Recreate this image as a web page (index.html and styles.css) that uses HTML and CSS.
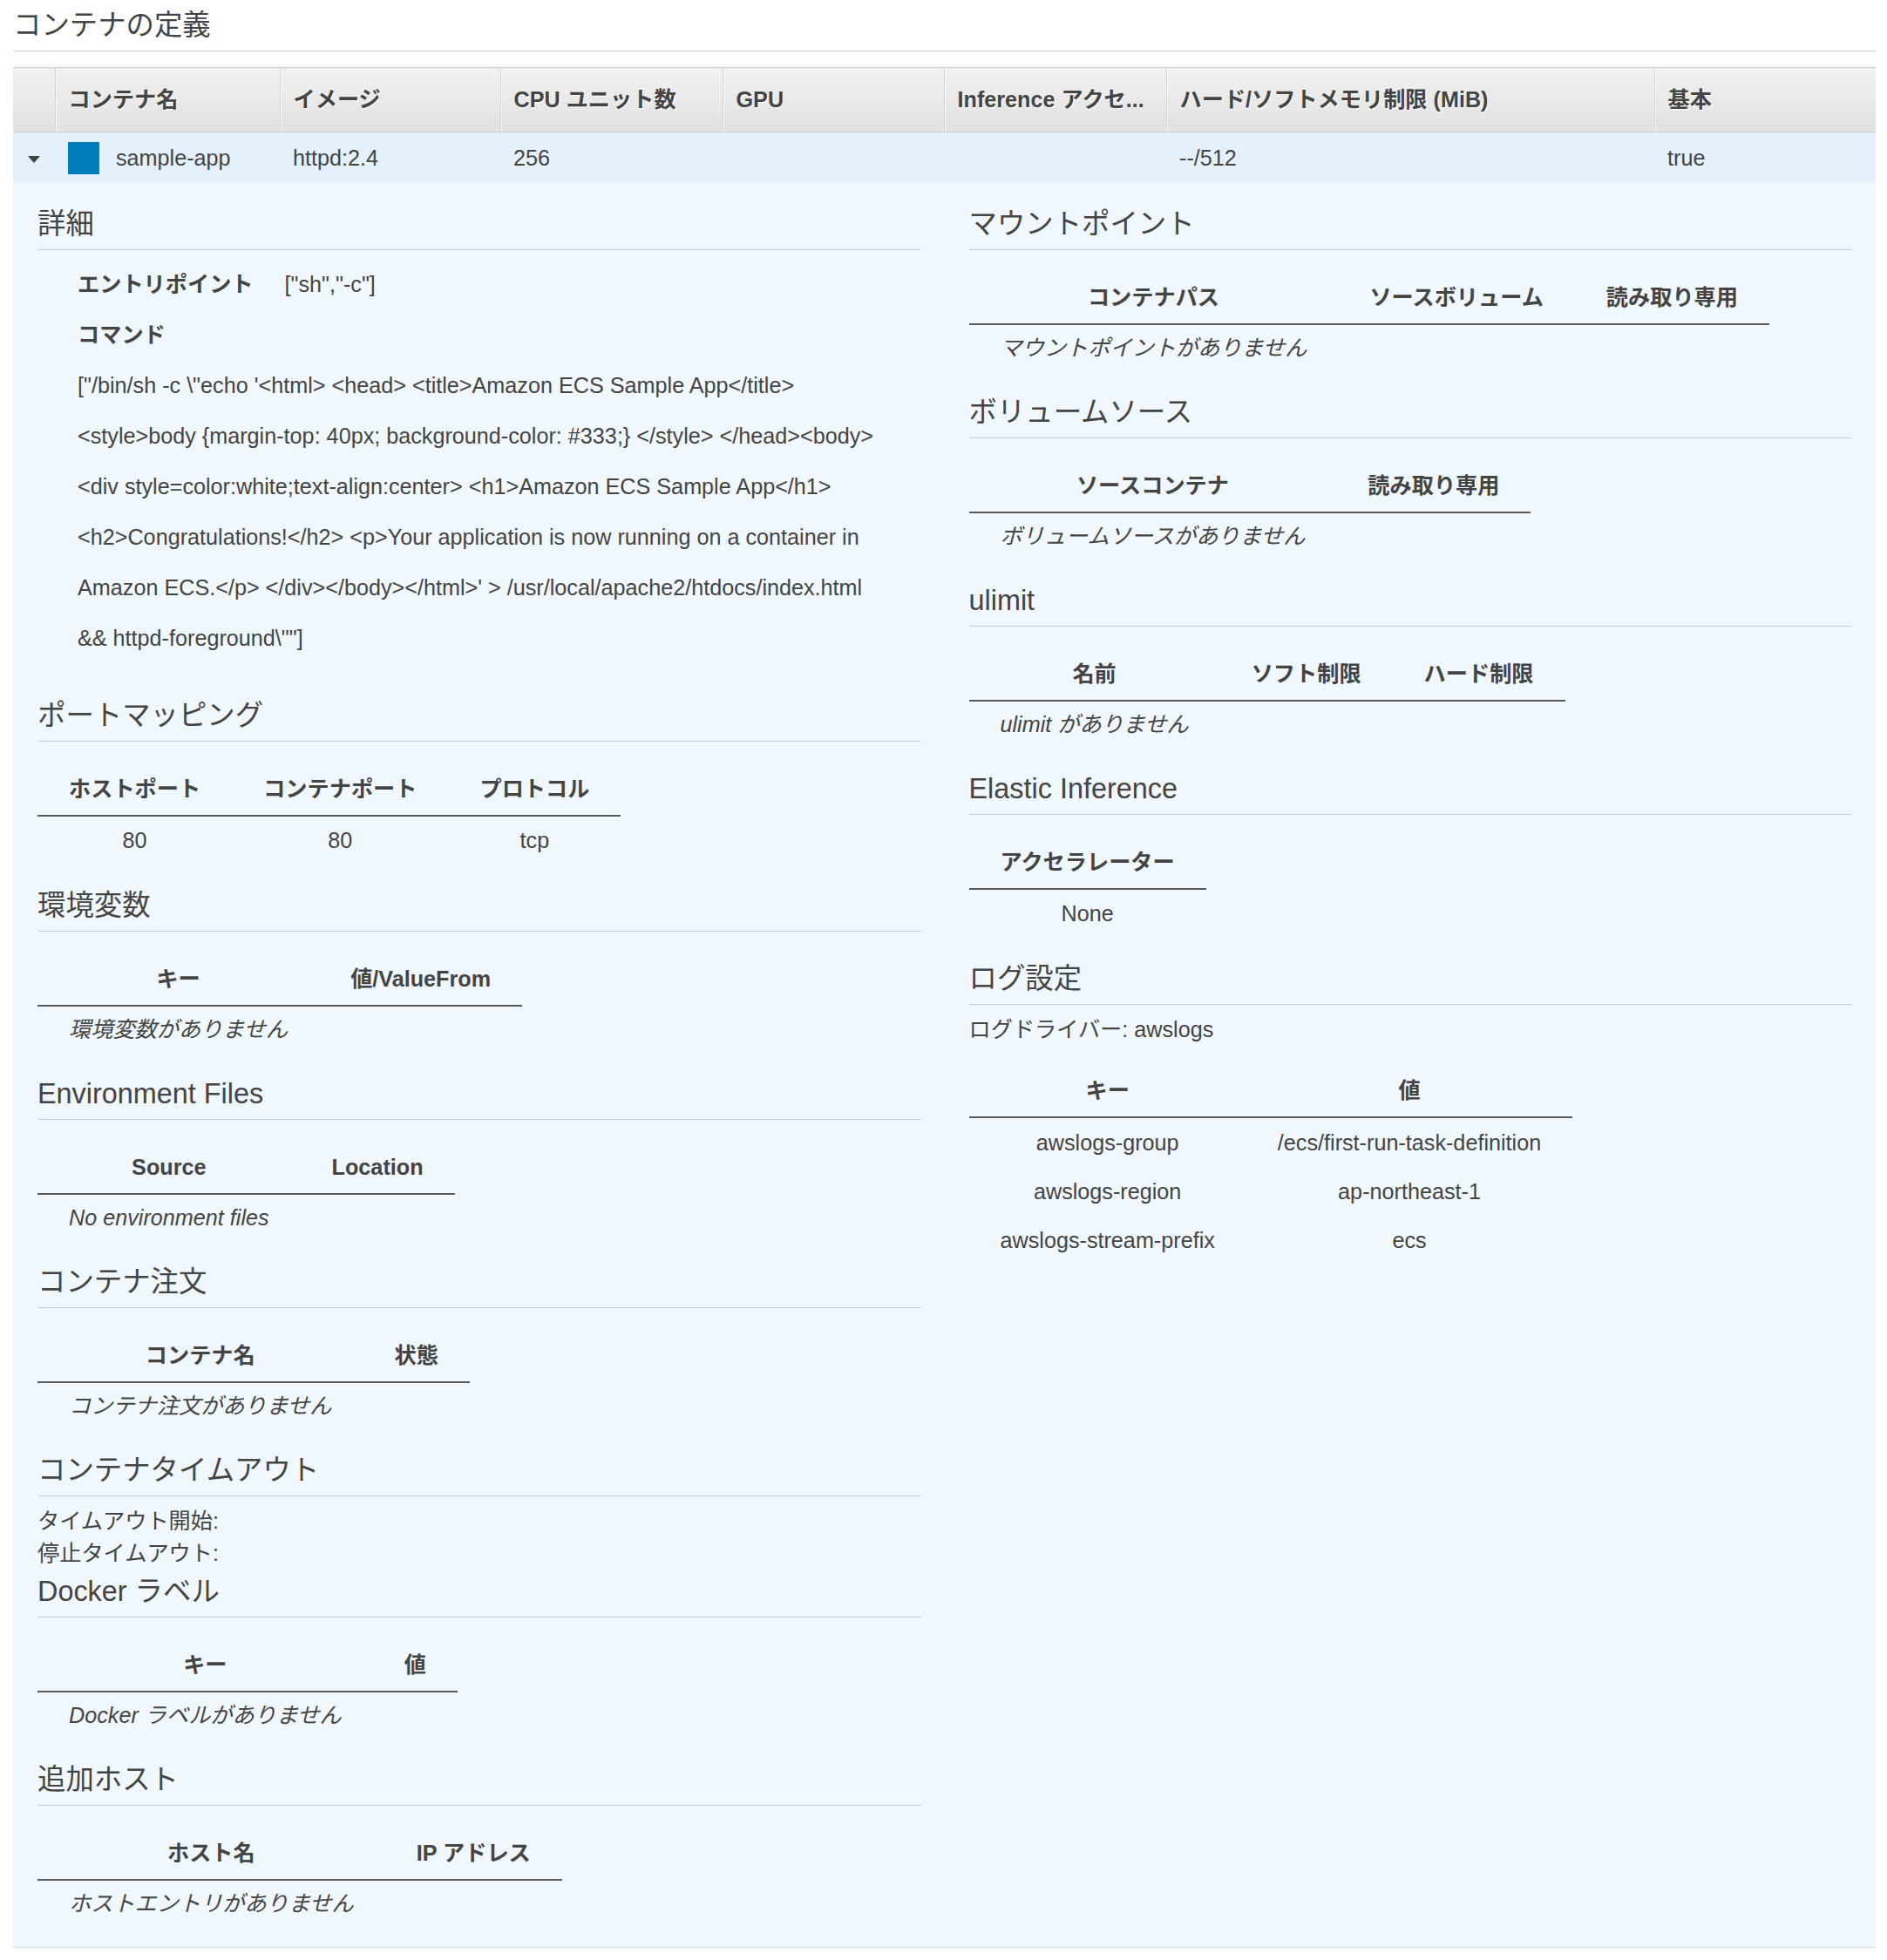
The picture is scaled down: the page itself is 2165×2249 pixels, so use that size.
FILE: index.html
```html
<!DOCTYPE html>
<html lang="ja">
<head>
<meta charset="utf-8">
<title>コンテナの定義</title>
<link rel="stylesheet" href="styles.css">
</head>
<body>
<div class="page">
  <h2 class="page-title">コンテナの定義</h2>
  <table class="grid">
    <colgroup>
      <col class="c-toggle"><col class="c-name"><col class="c-image"><col class="c-cpu"><col class="c-gpu"><col class="c-inf"><col class="c-mem"><col class="c-ess">
    </colgroup>
    <thead>
      <tr class="row-head">
        <th></th>
        <th>コンテナ名</th>
        <th>イメージ</th>
        <th>CPU ユニット数</th>
        <th>GPU</th>
        <th>Inference アクセ...</th>
        <th>ハード/ソフトメモリ制限 (MiB)</th>
        <th>基本</th>
      </tr>
    </thead>
    <tbody>
      <tr class="row-main">
        <td class="toggle"><span class="caret"></span></td>
        <td><div class="name"><span class="swatch"></span><span>sample-app</span></div></td>
        <td>httpd:2.4</td>
        <td>256</td>
        <td></td>
        <td></td>
        <td>--/512</td>
        <td>true</td>
      </tr>
      <tr class="row-detail">
        <td colspan="8">
          <div class="detail">
            <div class="col">
              <section class="sec">
                <h3 class="sec-title">詳細</h3>
                <div class="kv">
                  <div class="kv-row"><span class="kv-key">エントリポイント</span><span class="kv-val">["sh","-c"]</span></div>
                  <div class="kv-row"><span class="kv-key">コマンド</span></div>
                  <div class="kv-cmd">["/bin/sh -c \"echo '&lt;html&gt; &lt;head&gt; &lt;title&gt;Amazon ECS Sample App&lt;/title&gt; &lt;style&gt;body {margin-top: 40px; background-color: #333;} &lt;/style&gt; &lt;/head&gt;&lt;body&gt; &lt;div style=color:white;text-align:center&gt; &lt;h1&gt;Amazon ECS Sample App&lt;/h1&gt; &lt;h2&gt;Congratulations!&lt;/h2&gt; &lt;p&gt;Your application is now running on a container in Amazon ECS.&lt;/p&gt; &lt;/div&gt;&lt;/body&gt;&lt;/html&gt;' &gt; /usr/local/apache2/htdocs/index.html &amp;&amp; httpd-foreground\""]</div>
                </div>
              </section>

              <section class="sec">
                <h3 class="sec-title">ポートマッピング</h3>
                <table class="sub">
                  <thead><tr><th>ホストポート</th><th>コンテナポート</th><th>プロトコル</th></tr></thead>
                  <tbody><tr><td>80</td><td>80</td><td>tcp</td></tr></tbody>
                </table>
              </section>

              <section class="sec">
                <h3 class="sec-title">環境変数</h3>
                <table class="sub">
                  <thead><tr><th>キー</th><th>値/ValueFrom</th></tr></thead>
                  <tbody><tr><td class="empty">環境変数がありません</td></tr></tbody>
                </table>
              </section>

              <section class="sec">
                <h3 class="sec-title">Environment Files</h3>
                <table class="sub">
                  <thead><tr><th>Source</th><th>Location</th></tr></thead>
                  <tbody><tr><td class="empty">No environment files</td></tr></tbody>
                </table>
              </section>

              <section class="sec">
                <h3 class="sec-title">コンテナ注文</h3>
                <table class="sub">
                  <thead><tr><th>コンテナ名</th><th>状態</th></tr></thead>
                  <tbody><tr><td class="empty">コンテナ注文がありません</td></tr></tbody>
                </table>
              </section>

              <section class="sec sec-tight">
                <h3 class="sec-title">コンテナタイムアウト</h3>
                <div class="lines">
                  <div>タイムアウト開始:</div>
                  <div>停止タイムアウト:</div>
                </div>
              </section>

              <section class="sec">
                <h3 class="sec-title">Docker ラベル</h3>
                <table class="sub">
                  <thead><tr><th>キー</th><th>値</th></tr></thead>
                  <tbody><tr><td class="empty">Docker ラベルがありません</td></tr></tbody>
                </table>
              </section>

              <section class="sec">
                <h3 class="sec-title">追加ホスト</h3>
                <table class="sub">
                  <thead><tr><th>ホスト名</th><th>IP アドレス</th></tr></thead>
                  <tbody><tr><td class="empty">ホストエントリがありません</td></tr></tbody>
                </table>
              </section>
            </div>

            <div class="col">
              <section class="sec">
                <h3 class="sec-title">マウントポイント</h3>
                <table class="sub">
                  <thead><tr><th>コンテナパス</th><th>ソースボリューム</th><th>読み取り専用</th></tr></thead>
                  <tbody><tr><td class="empty">マウントポイントがありません</td></tr></tbody>
                </table>
              </section>

              <section class="sec">
                <h3 class="sec-title">ボリュームソース</h3>
                <table class="sub">
                  <thead><tr><th>ソースコンテナ</th><th>読み取り専用</th></tr></thead>
                  <tbody><tr><td class="empty">ボリュームソースがありません</td></tr></tbody>
                </table>
              </section>

              <section class="sec">
                <h3 class="sec-title">ulimit</h3>
                <table class="sub">
                  <thead><tr><th>名前</th><th>ソフト制限</th><th>ハード制限</th></tr></thead>
                  <tbody><tr><td class="empty">ulimit がありません</td></tr></tbody>
                </table>
              </section>

              <section class="sec">
                <h3 class="sec-title">Elastic Inference</h3>
                <table class="sub">
                  <thead><tr><th>アクセラレーター</th></tr></thead>
                  <tbody><tr><td>None</td></tr></tbody>
                </table>
              </section>

              <section class="sec">
                <h3 class="sec-title">ログ設定</h3>
                <div class="driver">ログドライバー: awslogs</div>
                <table class="sub sub-log">
                  <thead><tr><th>キー</th><th>値</th></tr></thead>
                  <tbody>
                    <tr><td>awslogs-group</td><td>/ecs/first-run-task-definition</td></tr>
                    <tr><td>awslogs-region</td><td>ap-northeast-1</td></tr>
                    <tr><td>awslogs-stream-prefix</td><td>ecs</td></tr>
                  </tbody>
                </table>
              </section>
            </div>
          </div>
        </td>
      </tr>
    </tbody>
  </table>
</div>
</body>
</html>
```

FILE: styles.css
```css
html, body {
  margin: 0;
  padding: 0;
  background: #ffffff;
}

body {
  color: #444444;
  font-family: "Liberation Sans", "Noto Sans CJK JP", Arial, sans-serif;
  font-size: 25.2px;
  line-height: 30px;
}

.page {
  padding: 0 13px 0 15px;
}

.page-title {
  margin: 0;
  padding: 9px 0;
  font-size: 32.4px;
  font-weight: 400;
  line-height: 40px;
  color: #444444;
  border-bottom: 1px solid #cccccc;
}

/* main container table */
.grid {
  width: 100%;
  margin-top: 18px;
  border-collapse: collapse;
  table-layout: fixed;
  border-top: 1px solid #cccccc;
}

.c-toggle { width: 48px; }
.c-name { width: 258px; }
.c-image { width: 253px; }
.c-cpu { width: 255px; }
.c-gpu { width: 254px; }
.c-inf { width: 255px; }
.c-mem { width: 560px; }
.c-ess { width: 254px; }

.row-head > th {
  height: 30px;
  padding: 21px 10px 22px 15px;
  line-height: 30px;
  font-weight: 700;
  text-align: left;
  color: #444444;
  text-shadow: 1px 1px 0 #ffffff;
  white-space: nowrap;
  overflow: hidden;
  background: linear-gradient(#f1f1f1, #e1e1e1);
  border-bottom: 1px solid #cfcfcf;
  border-left: 1px solid #d4d4d4;
  box-shadow: inset 1px 0 0 #f7f7f7;
}

.row-head > th:first-child {
  border-left: none;
  box-shadow: none;
}

.row-main > td {
  height: 30px;
  padding: 14px 15px;
  line-height: 30px;
  background: #e4f0fb;
  white-space: nowrap;
  vertical-align: middle;
}

.row-main > td.toggle {
  padding: 14px 0;
  text-align: center;
}

.caret {
  display: inline-block;
  width: 0;
  height: 0;
  border-left: 7.5px solid transparent;
  border-right: 7.5px solid transparent;
  border-top: 8px solid #444444;
  vertical-align: middle;
}

.name {
  display: flex;
  align-items: center;
  gap: 19px;
  height: 30px;
}

.swatch {
  flex: 0 0 auto;
  width: 36px;
  height: 37px;
  background: #007dbc;
}

.row-detail > td {
  padding: 0 27px 0 28px;
  background: #f0f7fd;
  border-bottom: 1px solid #d5dbe1;
}

.detail {
  display: grid;
  grid-template-columns: 1fr 1fr;
  column-gap: 55px;
  padding-top: 27px;
}

.col {
  min-width: 0;
}

/* sections */
.sec {
  margin-bottom: 28px;
}

.sec-tight {
  margin-bottom: 5px;
}

.col > .sec:last-child {
  margin-bottom: 24px;
}

.sec-title {
  margin: 0;
  padding-bottom: 9px;
  font-size: 32.4px;
  font-weight: 400;
  line-height: 40px;
  color: #444444;
  border-bottom: 1px solid #cccccc;
}

/* details key/values */
.kv {
  padding: 10px 30px 12px 46px;
  line-height: 58px;
}

.kv-row {
  display: flex;
  gap: 36px;
}

.kv-key {
  font-weight: 700;
}

.kv-cmd {
  line-height: 58px;
}

/* sub tables */
.sub {
  margin-top: 24px;
  border-collapse: collapse;
}

.sub th {
  padding: 15px 36px;
  line-height: 30px;
  font-weight: 700;
  text-align: center;
  white-space: nowrap;
  background: none;
  border-bottom: 2px solid #5a5a5a;
}

.sub td {
  padding: 12px 36px;
  line-height: 30px;
  text-align: center;
  white-space: nowrap;
}

.sub td.empty {
  padding: 11px 36px;
  text-align: left;
  font-style: italic;
}

.sub-log {
  margin-top: 21px;
}

.sub-log td {
  padding: 13px 36px;
}

.lines {
  padding-top: 10px;
  line-height: 37px;
}

.driver {
  margin-top: 10px;
  line-height: 37px;
}
```
